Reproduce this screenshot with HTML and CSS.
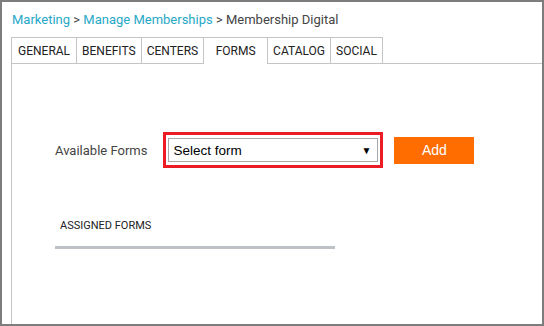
FILE: index.html
```html
<!DOCTYPE html>
<html>
<head>
<meta charset="utf-8">
<link rel="stylesheet" href="styles.css">
</head>
<body>
<div class="frame">
  <div class="breadcrumb">
    <a class="crumb-link">Marketing</a> &gt; <a class="crumb-link">Manage Memberships</a> &gt; <span class="crumb-current">Membership Digital</span>
  </div>
  <div class="tabs">
    <div class="tab">GENERAL</div>
    <div class="tab">BENEFITS</div>
    <div class="tab">CENTERS</div>
    <div class="tab active">FORMS</div>
    <div class="tab">CATALOG</div>
    <div class="tab">SOCIAL</div>
  </div>
  <div class="panel">
    <div class="form-row">
      <span class="label">Available Forms</span>
      <div class="highlight">
        <div class="select">
          <span class="select-text">Select form</span>
          <span class="select-arrow">&#9660;</span>
        </div>
      </div>
      <button class="add-btn">Add</button>
    </div>
    <div class="assigned">
      <div class="assigned-title">ASSIGNED FORMS</div>
      <div class="assigned-bar"></div>
    </div>
  </div>
</div>
</body>
</html>
```

FILE: styles.css
```css
html, body {
  margin: 0;
  padding: 0;
  background: #fff;
}
.frame {
  box-sizing: border-box;
  width: 544px;
  height: 326px;
  border: 2px solid #7d7d7d;
  overflow: hidden;
  padding-left: 9px;
  display: flex;
  flex-direction: column;
  font-family: Roboto, "Noto Sans", sans-serif;
}
.breadcrumb {
  font-size: 13px;
  line-height: 15px;
  color: #444;
  padding: 10px 0 0 1px;
  height: 25px;
}
.crumb-link {
  color: #27a8c8;
  text-decoration: none;
}
.crumb-current {
  color: #444;
}
.tabs {
  display: flex;
  height: 26px;
}
.tab {
  box-sizing: border-box;
  height: 26px;
  border: 1px solid #c4c4c4;
  border-bottom: none;
  border-left: none;
  padding: 0 5px;
  font-size: 12px;
  color: #222;
  display: flex;
  align-items: center;
}
.tab:first-child {
  border-left: 1px solid #c4c4c4;
  padding: 0 6px;
}
.tab.active {
  height: 27px;
  margin-bottom: -1px;
  background: #fff;
  position: relative;
  z-index: 1;
  padding: 0 11.5px;
}
.panel {
  flex: 1;
  border-top: 1px solid #c4c4c4;
  border-left: 1px solid #c4c4c4;
  margin-right: -20px;
  padding: 68px 0 0 43px;
}
.form-row {
  display: flex;
  align-items: center;
}
.label {
  font-size: 13px;
  color: #444;
  margin-right: 16px;
}
.highlight {
  border: 3px solid #ec1c24;
  padding: 3px 2px;
}
.select {
  box-sizing: border-box;
  width: 210px;
  height: 24px;
  border: 1px solid #a9a9a9;
  display: flex;
  align-items: center;
  justify-content: space-between;
  padding: 0 6px 0 4px;
  font-family: "Liberation Sans", Arial, sans-serif;
  font-size: 13.5px;
  color: #000;
}
.select-arrow {
  font-size: 10px;
}
.add-btn {
  margin-left: 11px;
  width: 80px;
  height: 27px;
  border: none;
  background: #ff6c00;
  color: #fff;
  font-family: "Liberation Sans", Arial, sans-serif;
  font-size: 14px;
  padding: 0;
}
.assigned {
  margin-top: 51px;
  width: 280px;
}
.assigned-title {
  font-size: 11px;
  line-height: 13px;
  color: #222;
  padding-left: 5px;
}
.assigned-bar {
  margin-top: 14px;
  height: 3px;
  background: #bdc1c5;
}
```
